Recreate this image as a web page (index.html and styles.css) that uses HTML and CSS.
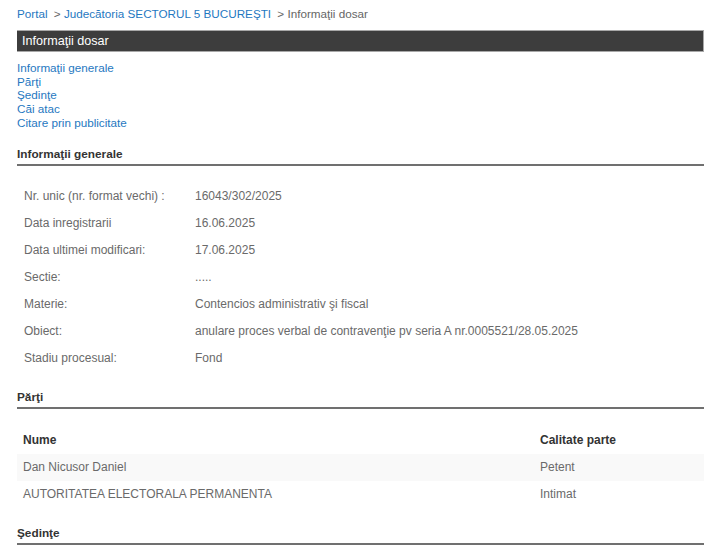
FILE: index.html
```html
<!DOCTYPE html>
<html lang="ro">
<head>
<meta charset="utf-8">
<title>Informații dosar</title>
<link rel="stylesheet" href="styles.css">
</head>
<body>
<div class="page">
  <div class="breadcrumb">
    <a href="#">Portal</a>
    <span class="sep">&gt;</span>
    <a href="#">Judecătoria SECTORUL 5 BUCUREŞTI</a>
    <span class="sep">&gt;</span>
    <span class="current">Informaţii dosar</span>
  </div>
  <div class="titlebar">Informaţii dosar</div>
  <nav class="toc">
    <a href="#">Informaţii generale</a>
    <a href="#">Părţi</a>
    <a href="#">Şedinţe</a>
    <a href="#">Căi atac</a>
    <a href="#">Citare prin publicitate</a>
  </nav>

  <h3 class="section first">Informaţii generale</h3>
  <table class="info">
    <tr><td class="lbl">Nr. unic (nr. format vechi) :</td><td>16043/302/2025</td></tr>
    <tr><td class="lbl">Data inregistrarii</td><td>16.06.2025</td></tr>
    <tr><td class="lbl">Data ultimei modificari:</td><td>17.06.2025</td></tr>
    <tr><td class="lbl">Sectie:</td><td>.....</td></tr>
    <tr><td class="lbl">Materie:</td><td>Contencios administrativ şi fiscal</td></tr>
    <tr><td class="lbl">Obiect:</td><td>anulare proces verbal de contravenţie pv seria A nr.0005521/28.05.2025</td></tr>
    <tr><td class="lbl">Stadiu procesual:</td><td>Fond</td></tr>
  </table>

  <h3 class="section">Părţi</h3>
  <table class="parties">
    <thead>
      <tr><th class="c1">Nume</th><th>Calitate parte</th></tr>
    </thead>
    <tbody>
      <tr class="odd"><td>Dan Nicusor Daniel</td><td>Petent</td></tr>
      <tr><td>AUTORITATEA ELECTORALA PERMANENTA</td><td>Intimat</td></tr>
    </tbody>
  </table>

  <h3 class="section">Şedinţe</h3>
</div>
</body>
</html>
```

FILE: styles.css
```css
html, body {
  margin: 0;
  padding: 0;
  background: #ffffff;
}

body {
  font-family: "Liberation Sans", Arial, sans-serif;
  font-size: 12px;
  color: #555;
}

.page {
  width: 687px;
  margin-left: 17px;
}

a {
  color: #1f78c1;
  text-decoration: none;
}

.breadcrumb {
  padding-top: 7px;
  line-height: 14px;
  height: 14px;
  font-size: 11.7px;
}

.breadcrumb .sep {
  color: #666;
  margin-left: 3px;
}

.breadcrumb .current {
  color: #666;
}

.titlebar {
  margin-top: 9px;
  height: 20px;
  line-height: 20px;
  background: #3d3d3d;
  border: 1px solid #a8a8a8;
  border-left: none;
  color: #fff;
  font-size: 12.6px;
  padding-left: 5px;
}

.toc {
  margin-top: 9px;
  display: flex;
  flex-direction: column;
  line-height: 13.7px;
  font-size: 11.7px;
}

.section {
  margin: 16px 0 0 0;
  font-size: 11.8px;
  font-weight: bold;
  color: #333;
  line-height: 14px;
  padding-bottom: 3px;
  border-bottom: 2px solid #707070;
}

.section.first {
  margin-top: 17px;
}

.section + table {
  margin-top: 17px;
}

.info {
  border-collapse: collapse;
  width: 100%;
  color: #6a6a6a;
}

.info td {
  height: 27px;
  padding: 0 0 0 7px;
  vertical-align: middle;
}

.info td.lbl {
  width: 164px;
}

.info + .section {
  margin-top: 18px;
}

.parties {
  border-collapse: collapse;
  width: 100%;
  color: #6a6a6a;
}

.parties th {
  text-align: left;
  font-weight: bold;
  color: #333;
  height: 28px;
  padding: 0 0 0 6px;
}

.parties th.c1 {
  width: 511px;
}

.parties td {
  height: 27px;
  padding: 0 0 0 6px;
}

.parties tr.odd td {
  background: #f9f9f9;
}

.parties + .section {
  margin-top: 18px;
}
```
